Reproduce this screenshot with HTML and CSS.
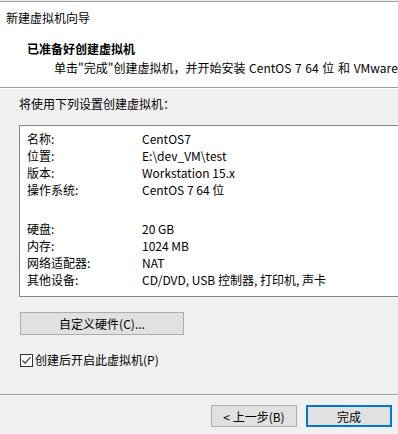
FILE: index.html
```html
<!DOCTYPE html>
<html lang="zh-CN">
<head>
    <meta charset="UTF-8">
    <title>新建虚拟机向导</title>
    <link rel="stylesheet" href="styles.css">
</head>
<body>
    <div class="window">
        <div class="header">
            <div class="window-title">新建虚拟机向导</div>
            <div class="heading">已准备好创建虚拟机</div>
            <div class="subtitle">单击"完成"创建虚拟机，并开始安装 CentOS 7 64 位 和 VMware</div>
        </div>

        <div class="content">
            <div class="intro">将使用下列设置创建虚拟机：</div>

            <div class="summary">
                <div class="row"><span>名称:</span><span>CentOS7</span></div>
                <div class="row"><span>位置:</span><span>E:\dev_VM\test</span></div>
                <div class="row"><span>版本:</span><span>Workstation 15.x</span></div>
                <div class="row"><span>操作系统:</span><span>CentOS 7 64 位</span></div>
                <div class="spacer"></div>
                <div class="row"><span>硬盘:</span><span>20 GB</span></div>
                <div class="row"><span>内存:</span><span>1024 MB</span></div>
                <div class="row"><span>网络适配器:</span><span>NAT</span></div>
                <div class="row"><span>其他设备:</span><span>CD/DVD, USB 控制器, 打印机, 声卡</span></div>
            </div>

            <button class="btn btn-custom">自定义硬件(C)...</button>

            <label class="check">
                <span class="check-box">
                    <svg width="11" height="11" viewBox="0 0 11 11">
                        <path d="M1.5 5.5 L4.2 8.2 L9.5 2.2" fill="none" stroke="#333" stroke-width="1.1"/>
                    </svg>
                </span>
                <span>创建后开启此虚拟机(P)</span>
            </label>
        </div>

        <div class="footer">
            <button class="btn">&lt; 上一步(B)</button>
            <button class="btn btn-default">完成</button>
        </div>
    </div>
</body>
</html>
```

FILE: styles.css
```css
html, body {
    margin: 0;
    padding: 0;
}

body {
    width: 398px;
    height: 434px;
    overflow: hidden;
    background: #f0f0f0;
    font-family: "Noto Sans CJK SC", "Noto Sans", sans-serif;
    font-size: 12px;
    color: #000;
}

.window {
    margin-top: 1px;
    border-top: 1px solid #a0a0a0;
    height: 432px;
    display: flex;
    flex-direction: column;
}

/* white header band */
.header {
    background: #fff;
    border-bottom: 1px solid #a0a0a0;
    box-shadow: 0 1px 0 #fff;
    white-space: nowrap;
    overflow: hidden;
    padding-bottom: 11px;
}

.window-title {
    line-height: 16px;
    margin-top: 8px;
    padding-left: 6px;
}

.heading {
    line-height: 16px;
    margin-top: 15px;
    padding-left: 27px;
    font-weight: bold;
}

.subtitle {
    line-height: 16px;
    margin-top: 3px;
    padding-left: 54px;
    word-spacing: 1px;
}

.content {
    flex: 1;
    padding-left: 19px;
}

.intro {
    line-height: 16px;
    margin-top: 8px;
}

/* summary list box, runs to the right edge */
.summary {
    margin-top: 13px;
    height: 166px;
    background: #fff;
    border: 1px solid #828790;
    border-right: none;
    padding-top: 4px;
    box-sizing: content-box;
}

.row {
    display: grid;
    grid-template-columns: 115px 1fr;
    padding-left: 7px;
    line-height: 17px;
    white-space: nowrap;
}

.spacer {
    height: 22px;
}

.btn {
    font-family: inherit;
    font-size: 12px;
    color: #000;
    background: #e1e1e1;
    border: 1px solid #adadad;
    height: 22px;
    width: 86px;
    padding: 0;
}

.btn-custom {
    display: block;
    width: 164px;
    height: 23px;
    margin-top: 15px;
    margin-left: 1px;
}

.check {
    display: flex;
    align-items: center;
    gap: 2px;
    margin-top: 17px;
    margin-left: 1px;
    line-height: 16px;
}

.check-box {
    width: 11px;
    height: 11px;
    border: 1px solid #333;
    background: #fff;
    display: flex;
}

.footer {
    border-top: 1px solid #a0a0a0;
    box-shadow: inset 0 1px 0 #fff;
    display: flex;
    justify-content: flex-end;
    gap: 9px;
    padding: 10px 6px 7px 0;
}

.btn-default {
    border: 2px solid #0078d7;
}
```
